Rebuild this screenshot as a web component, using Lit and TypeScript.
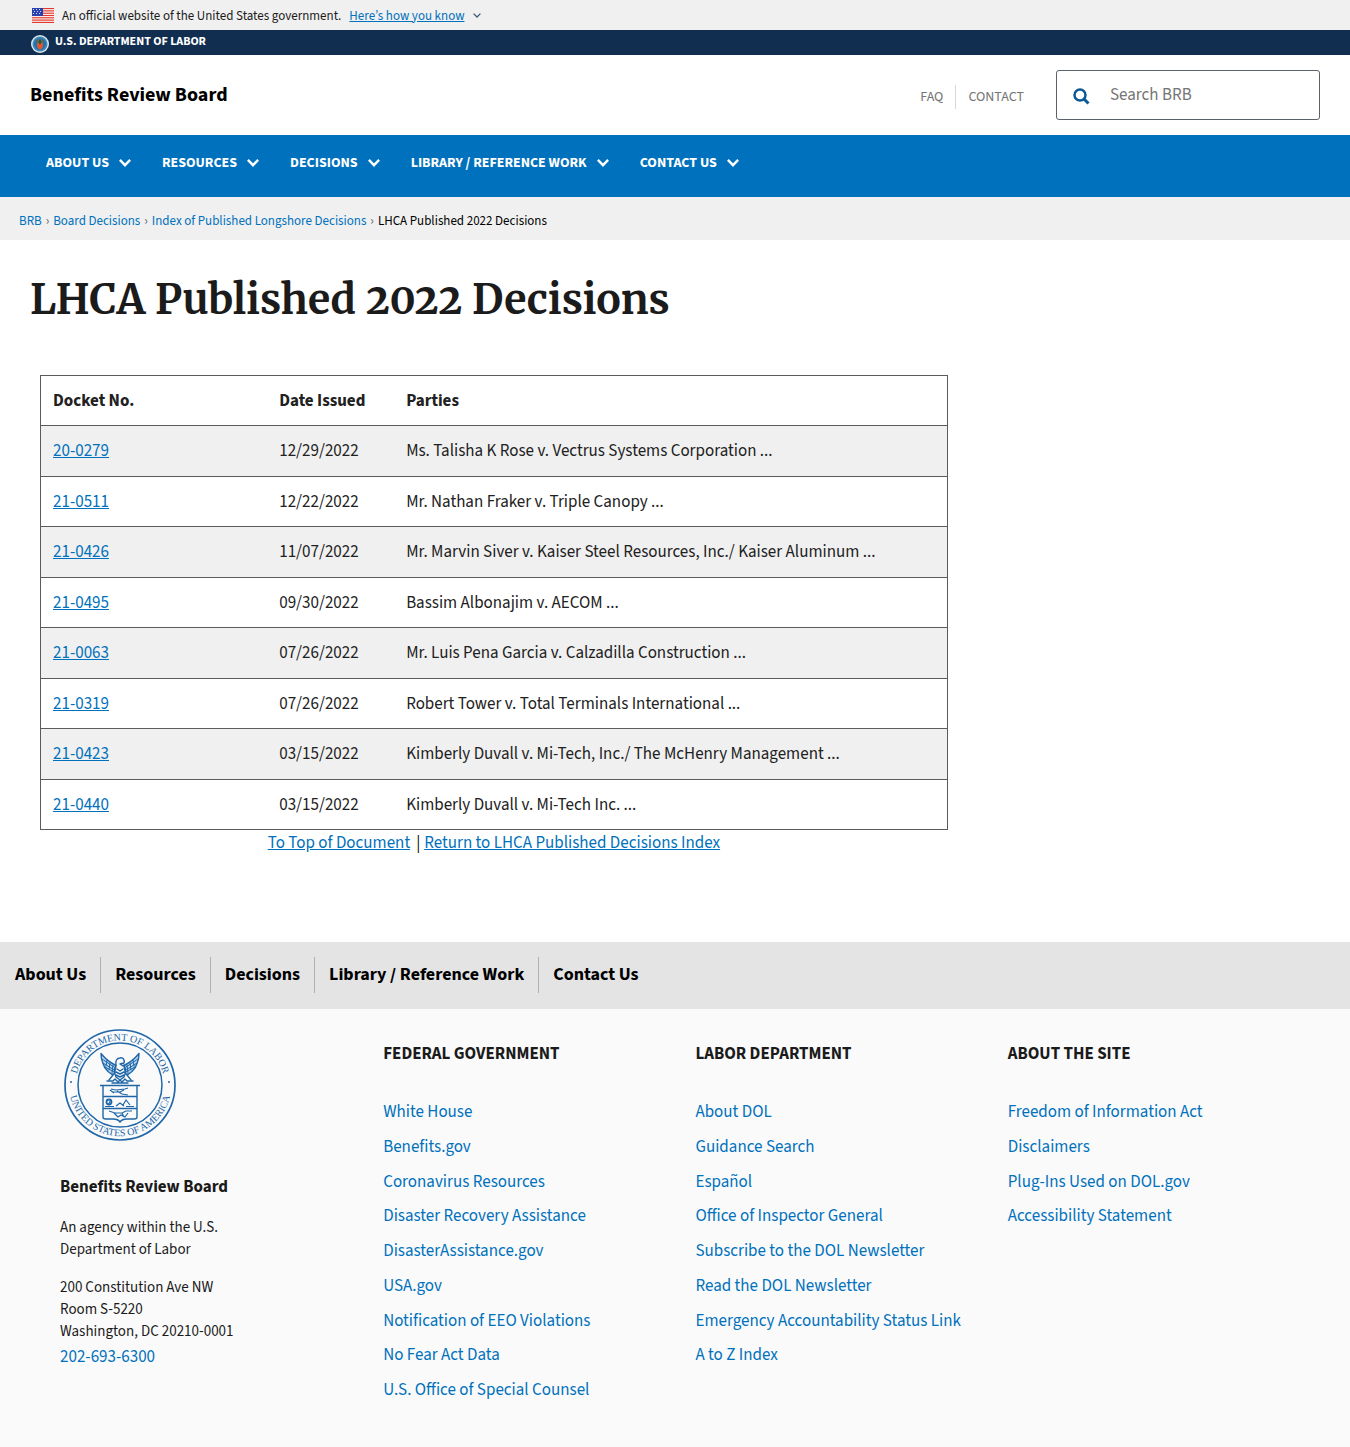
import { LitElement, html, css, svg } from "lit";
import { customElement } from "lit/decorators.js";

interface Decision {
  docket: string;
  date: string;
  parties: string;
}

const SECTIONS = ["About Us", "Resources", "Decisions", "Library / Reference Work", "Contact Us"];

const DECISIONS: Decision[] = [
  { docket: "20-0279", date: "12/29/2022", parties: "Ms. Talisha K Rose v. Vectrus Systems Corporation ..." },
  { docket: "21-0511", date: "12/22/2022", parties: "Mr. Nathan Fraker v. Triple Canopy ..." },
  { docket: "21-0426", date: "11/07/2022", parties: "Mr. Marvin Siver v. Kaiser Steel Resources, Inc./ Kaiser Aluminum ..." },
  { docket: "21-0495", date: "09/30/2022", parties: "Bassim Albonajim v. AECOM ..." },
  { docket: "21-0063", date: "07/26/2022", parties: "Mr. Luis Pena Garcia v. Calzadilla Construction ..." },
  { docket: "21-0319", date: "07/26/2022", parties: "Robert Tower v. Total Terminals International ..." },
  { docket: "21-0423", date: "03/15/2022", parties: "Kimberly Duvall v. Mi-Tech, Inc./ The McHenry Management ..." },
  { docket: "21-0440", date: "03/15/2022", parties: "Kimberly Duvall v. Mi-Tech Inc. ..." },
];

const FOOTER_COLUMNS = [
  {
    title: "FEDERAL GOVERNMENT",
    links: [
      "White House",
      "Benefits.gov",
      "Coronavirus Resources",
      "Disaster Recovery Assistance",
      "DisasterAssistance.gov",
      "USA.gov",
      "Notification of EEO Violations",
      "No Fear Act Data",
      "U.S. Office of Special Counsel",
    ],
  },
  {
    title: "LABOR DEPARTMENT",
    links: [
      "About DOL",
      "Guidance Search",
      "Español",
      "Office of Inspector General",
      "Subscribe to the DOL Newsletter",
      "Read the DOL Newsletter",
      "Emergency Accountability Status Link",
      "A to Z Index",
    ],
  },
  {
    title: "ABOUT THE SITE",
    links: ["Freedom of Information Act", "Disclaimers", "Plug-Ins Used on DOL.gov", "Accessibility Statement"],
  },
];

const base = css`
  :host {
    display: block;
  }
  * {
    box-sizing: border-box;
  }
  a {
    color: #0071bc;
  }
  ul,
  ol {
    list-style: none;
    margin: 0;
    padding: 0;
  }
`;

@customElement("brb-flag")
class BrbFlag extends LitElement {
  static styles = css`
    :host,
    svg {
      display: block;
    }
  `;
  render() {
    return html`<svg width="22" height="15" viewBox="0 0 22 15" aria-hidden="true">
      <rect width="22" height="15" fill="#fff" />
      ${[0, 1, 2, 3, 4, 5, 6].map((n) => svg`<rect y=${n * 2.3} width="22" height="1.2" fill="#e0382c" />`)}
      <rect width="11" height="8" fill="#2a3fb0" />
      ${[1, 3, 5].map((y) => [1, 4, 7].map((x) => svg`<rect x=${x + (y === 3 ? 1 : 0)} y=${y} width="1" height="1" fill="#d5dcf5" />`))}
    </svg>`;
  }
}

@customElement("brb-seal")
class BrbSeal extends LitElement {
  static styles = css`
    :host,
    svg {
      display: block;
    }
    .ring {
      font: 10px "Liberation Serif", serif;
      fill: #2267a8;
    }
  `;
  render() {
    return html`<svg width="112" height="112" viewBox="0 0 112 112" role="img" aria-label="Department of Labor seal">
      <defs>
        <path id="upper" d="M11.500 56a44.500 44.500 0 0 1 89 0" />
        <path id="lower" d="M4.800 56a51.200 51.200 0 0 0 102.400 0" />
      </defs>
      <g fill="none" stroke="#1f66a8">
        <circle cx="56" cy="56" r="55" stroke-width="1.700" />
        <circle cx="56" cy="56" r="42" stroke-width="1.500" />
      </g>
      <circle cx="7" cy="53" r="1" fill="#2267a8" />
      <circle cx="105" cy="53" r="1" fill="#2267a8" />
      <text class="ring" text-anchor="middle"><textPath href="#upper" startOffset="50%">DEPARTMENT OF LABOR</textPath></text>
      <text class="ring" text-anchor="middle"><textPath href="#lower" startOffset="50%">UNITED STATES OF AMERICA</textPath></text>
      <g fill="none" stroke="#1f66a8" stroke-width="1.400" stroke-linejoin="round" stroke-linecap="round">
        <path d="M37 24.500c0 5 1 8 2 10 1 4 3 6 5 8l4 3c2 0 3-2 3-4l1-5c-6-3-11-7-15-12z" fill="#b9d6ee" />
        <path d="M75 24.500c0 5-1 8-2 10-1 4-3 6-5 8l-4 3c-2 0-3-2-3-4l-1-5c6-3 11-7 15-12z" fill="#b9d6ee" />
        <path d="M38 30l12 8M39 34l11 7M41 38l9 5M74 30l-12 8M73 34l-11 7M71 38l-9 5M43 31l-1 6M46 34l-1 7M49 36l-1 8M69 31l1 6M66 34l1 7M63 36l1 8" stroke-width="1" />
        <path d="M52 36c-1-4 1-7 4-7 3-1 5 2 4 5l-4 1 3 2M52 36c-2 4-2 8 0 12l4 3 4-3c2-4 2-8 0-12M53 40l3 2 3-2M52 43l4 2 4-2M52 46l4 2 4-2M49 46l-4 5M63 46l4 5" />
        <path d="M43 52h6l2-2 3 3 2-2 2 2 3-3 2 2h6M48 54h16" />
      </g>
      <g fill="none" stroke="#1f66a8" stroke-width="1.200">
        <path d="M36 56.500h40M39 57v31q0 2 3 2h7q5 0 7 3 2-3 7-3h7q3 0 3-2V57M39 67.500h34M39 79.500h34" stroke-width="1.400" />
        <path d="M47 60l5 1 9-1 3-1M49 63h7l4-2M53 62l5 3 6 1M46 61l4 3" />
        <circle cx="45" cy="73" r="2.500" stroke-width="1.800" />
        <path d="M41 77.500h9M44 76l3-5M52 77l4-3 4 3M59 76l3-5 4 5M62 77.500h8" />
        <path d="M45 82l6 2h7l4-2h6M50 84l4 4 3-2 4 2 3-4M58 84l2 4" />
      </g>
    </svg>`;
  }
}

@customElement("brb-header")
class BrbHeader extends LitElement {
  static styles = [
    base,
    css`
      .gov {
        display: flex;
        align-items: center;
        height: 30px;
        padding: 1px 32px 0;
        gap: 8px;
        background: #f0f0f0;
        font-size: 13px;
        color: #1b1b1b;
      }
      .know {
        display: flex;
        align-items: center;
        gap: 8px;
        padding: 0;
        border: 0;
        background: none;
        font: inherit;
        color: #0071bc;
        cursor: pointer;
      }
      .know-text {
        text-decoration: underline;
      }
      .dol {
        display: flex;
        align-items: flex-start;
        height: 25px;
        padding: 0 31px;
        gap: 6px;
        background: #112e51;
      }
      .dol svg {
        margin-top: 5px;
      }
      .dol a {
        font-size: 12px;
        font-weight: 700;
        color: #fff;
        text-decoration: none;
      }
      .brand {
        display: flex;
        align-items: center;
        height: 80px;
        padding: 0 30px;
      }
      .site {
        flex: 1;
        font-size: 20px;
        font-weight: 700;
        color: #000;
        text-decoration: none;
      }
      .quick {
        display: flex;
        margin: 0 32px 0 0;
        padding-top: 4px;
        font-size: 14px;
        line-height: 24px;
      }
      .quick a {
        color: #757575;
        text-decoration: none;
      }
      .quick li + li {
        margin-left: 12px;
        padding-left: 12px;
        border-left: 1px solid #d6d7d9;
      }
      .search {
        display: flex;
        align-items: center;
        width: 264px;
        height: 50px;
        border: 1px solid #5b616b;
        border-radius: 3px;
      }
      .search button {
        display: flex;
        padding: 3px 20px 0 16px;
        border: 0;
        background: none;
      }
      .search input {
        flex: 1;
        min-width: 0;
        padding: 0;
        border: 0;
        outline: 0;
        background: none;
        font: inherit;
      }
      .search input::placeholder {
        color: #757575;
        opacity: 1;
      }
      .menu {
        display: flex;
        height: 62px;
        padding: 16px 30px;
        background: #0071bc;
      }
      .menu button {
        display: flex;
        align-items: center;
        gap: 10px;
        height: 24px;
        padding: 0 15px 0 16px;
        border: 0;
        background: none;
        font: inherit;
        font-size: 14px;
        font-weight: 700;
        color: #fff;
        text-transform: uppercase;
        white-space: nowrap;
      }
      .crumbs {
        display: flex;
        align-items: center;
        height: 43px;
        padding: 4px 19px 0;
        background: #f0f0f0;
        font-size: 13px;
      }
      .crumbs ol {
        display: flex;
      }
      .crumbs a {
        text-decoration: none;
      }
      .crumbs li + li::before {
        content: "›";
        margin: 0 4px;
        color: #5b616b;
      }
      .current {
        color: #000;
      }
    `,
  ];
  render() {
    return html`
      <section class="gov" aria-label="Official government website">
        <brb-flag></brb-flag>
        <span>An official website of the United States government.</span>
        <button class="know" type="button">
          <span class="know-text">Here’s how you know</span>
          <svg width="8" height="5" viewBox="0 0 8 5" fill="none" stroke="#3a5a78" stroke-width="1.300" aria-hidden="true">
            <path d="M.6.600 4 4 7.400.600" />
          </svg>
        </button>
      </section>
      <section class="dol" aria-label="Department">
        <svg width="18" height="18" viewBox="0 0 18 18" aria-hidden="true">
          <circle cx="9" cy="9" r="9" fill="#d9e6ef" />
          <circle cx="9" cy="9" r="7.500" fill="#3d86b8" />
          <circle cx="9" cy="9" r="5.800" fill="#1f70b0" />
          <path d="M5 7l2-3 2 1 2-1 2 3-2 1H7z" fill="#72653d" />
          <path d="M6 8h6v4l-3 3-3-3z" fill="#e0562c" />
          <path d="M8 5h2v4H8z" fill="#1d5f4e" />
        </svg>
        <a href="#dol">U.S. DEPARTMENT OF LABOR</a>
      </section>
      <header class="brand">
        <a class="site" href="#home">Benefits Review Board</a>
        <ul class="quick">
          <li><a href="#faq">FAQ</a></li>
          <li><a href="#contact">CONTACT</a></li>
        </ul>
        <form class="search" role="search">
          <button type="button" aria-label="Search">
            <svg width="17" height="17" viewBox="0 0 17 17" fill="none" stroke="#0b5896" aria-hidden="true">
              <circle cx="7" cy="7" r="5.500" stroke-width="2.500" />
              <path d="M11 11l4.500 4.500" stroke-width="3" />
            </svg>
          </button>
          <input type="search" aria-label="Search BRB" placeholder="Search BRB" />
        </form>
      </header>
      <nav class="menu" aria-label="Main">
        ${SECTIONS.map(
          (name) => html`<button type="button">
            ${name}
            <svg width="12" height="8" viewBox="0 0 12 8" fill="none" stroke="#fff" stroke-width="2.400" aria-hidden="true">
              <path d="M.9.900 6 6.200 11.100.900" />
            </svg>
          </button>`
        )}
      </nav>
      <nav class="crumbs" aria-label="Breadcrumb">
        <ol>
          <li><a href="#brb">BRB</a></li>
          <li><a href="#board">Board Decisions</a></li>
          <li><a href="#index">Index of Published Longshore Decisions</a></li>
          <li class="current" aria-current="page">LHCA Published 2022 Decisions</li>
        </ol>
      </nav>
    `;
  }
}

@customElement("brb-decisions")
class BrbDecisions extends LitElement {
  static styles = [
    base,
    css`
      .main {
        padding: 32px 30px 86px;
      }
      h1 {
        margin: 0 0 47px;
        font-family: Merriweather, "DejaVu Serif Condensed", "DejaVu Serif", serif;
        font-size: 41px;
        line-height: 56px;
        font-weight: 700;
        font-variant-numeric: oldstyle-nums;
        color: #1b1b1b;
      }
      .content {
        width: 72%;
        padding: 0 11px 0 10px;
      }
      table {
        width: 100%;
        table-layout: fixed;
        border: 1px solid #5b5b5b;
        border-collapse: collapse;
        color: #212121;
      }
      tr {
        height: 50px;
      }
      tbody tr:nth-child(odd) {
        height: 51px;
        background: #f0f0f0;
      }
      th,
      td {
        padding: 0 12px;
        border-bottom: 1px solid #5b5b5b;
        text-align: left;
      }
      .docket {
        width: 25%;
      }
      .date {
        width: 14%;
      }
      .after {
        display: flex;
        justify-content: center;
        gap: 6px;
        margin: 0;
        line-height: 26px;
      }
      .after span {
        margin-right: -2px;
      }
    `,
  ];
  render() {
    return html`<main class="main">
      <h1>LHCA Published 2022 Decisions</h1>
      <div class="content">
        <table>
          <thead>
            <tr>
              <th class="docket" scope="col">Docket No.</th>
              <th class="date" scope="col">Date Issued</th>
              <th scope="col">Parties</th>
            </tr>
          </thead>
          <tbody>
            ${DECISIONS.map(
              (d) => html`<tr>
                <td><a href="#${d.docket}">${d.docket}</a></td>
                <td>${d.date}</td>
                <td>${d.parties}</td>
              </tr>`
            )}
          </tbody>
        </table>
        <p class="after">
          <a href="#top">To Top of Document</a>
          <span>|</span>
          <a href="#index">Return to LHCA Published Decisions Index</a>
        </p>
      </div>
    </main>`;
  }
}

@customElement("brb-footer")
class BrbFooter extends LitElement {
  static styles = [
    base,
    css`
      .bar {
        display: flex;
        align-items: center;
        height: 67px;
        padding: 0 1px 1px;
        background: #e4e4e4;
      }
      .bar a {
        padding: 0 14px;
        font-size: 18px;
        line-height: 36px;
        font-weight: 700;
        color: #000;
        text-decoration: none;
      }
      .bar a + a {
        border-left: 1px solid #aeb0b5;
      }
      .footer {
        display: grid;
        grid-template-columns: 1.035fr 1fr 1fr 1fr;
        min-height: 438px;
        padding: 20px 30px 38px 60px;
        background: #fafafa;
      }
      brb-seal {
        margin-left: 4px;
      }
      h2,
      h3 {
        margin: 0;
        font-size: 17px;
        line-height: 24px;
        font-weight: 700;
        color: #1b1b1b;
      }
      h2 {
        margin-top: 34px;
      }
      h3 {
        margin: 13px 0 29px;
      }
      p {
        margin: 16px 0 0;
        font-size: 15px;
        line-height: 22px;
        color: #1b1b1b;
      }
      .agency {
        margin-top: 18px;
      }
      .phone {
        line-height: 28px;
      }
      .footer a {
        text-decoration: none;
      }
      li {
        line-height: 35px;
      }
      li:nth-child(4n + 3) {
        line-height: 34px;
      }
    `,
  ];
  render() {
    return html`
      <nav class="bar" aria-label="Footer">${SECTIONS.map((name) => html`<a href="#section">${name}</a>`)}</nav>
      <footer class="footer">
        <section>
          <brb-seal></brb-seal>
          <h2>Benefits Review Board</h2>
          <p class="agency">An agency within the U.S.<br />Department of Labor</p>
          <p>200 Constitution Ave NW<br />Room S-5220<br />Washington, DC 20210-0001</p>
          <a class="phone" href="tel:202-693-6300">202-693-6300</a>
        </section>
        ${FOOTER_COLUMNS.map(
          (col) => html`<section>
            <h3>${col.title}</h3>
            <ul>
              ${col.links.map((link) => html`<li><a href="#link">${link}</a></li>`)}
            </ul>
          </section>`
        )}
      </footer>
    `;
  }
}

@customElement("app-root")
class AppRoot extends LitElement {
  static styles = css`
    :host {
      display: block;
      background: #fff;
      font-family: "Source Sans Pro", "Source Sans 3", "Noto Sans CJK KR", "Noto Sans", sans-serif;
      font-size: 17px;
      line-height: 24px;
    }
  `;
  render() {
    return html`<brb-header></brb-header><brb-decisions></brb-decisions><brb-footer></brb-footer>`;
  }
}
